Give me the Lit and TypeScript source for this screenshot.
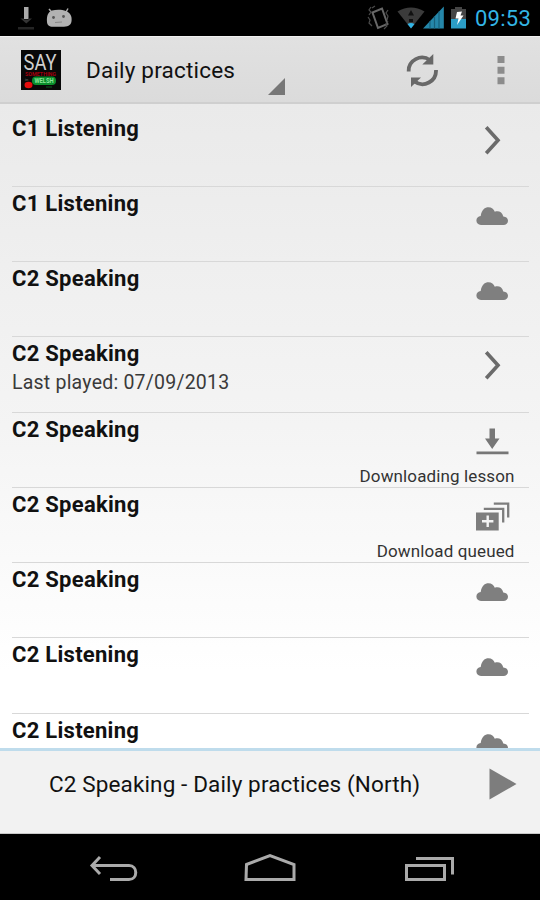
import { LitElement, html, svg, css, nothing } from "lit";
import { customElement } from "lit/decorators.js";

type IconName = "open" | "cloud" | "download" | "queued";

interface Lesson {
  title: string;
  icon: IconName;
  played?: string;
  status?: string;
}

const lessons: Lesson[] = [
  { title: "C1 Listening", icon: "open" },
  { title: "C1 Listening", icon: "cloud" },
  { title: "C2 Speaking", icon: "cloud" },
  { title: "C2 Speaking", icon: "open", played: "Last played: 07/09/2013" },
  { title: "C2 Speaking", icon: "download", status: "Downloading lesson" },
  { title: "C2 Speaking", icon: "queued", status: "Download queued" },
  { title: "C2 Speaking", icon: "cloud" },
  { title: "C2 Listening", icon: "cloud" },
  { title: "C2 Listening", icon: "cloud" },
];

const shapes = {
  open: svg`<path d="M14.2 3.2 26 16.3 14.2 29.2" fill="none" stroke="#6b6b6b" stroke-width="3.6"/>`,
  cloud: svg`<path fill="#7f7f7f" d="M9 26c-3 0-4.6-2-4.6-4.4 0-2.6 1.7-4.3 4.3-4.6C9.600 10.800 13 8.300 16.500 8.300c3 0 5.400 1.800 6.300 4.500 3.900-1.400 7.500.5 8.500 4.700 3 .3 4.700 1.900 4.700 4.300 0 2.700-1.900 4.200-4.600 4.200z"/>`,
  download: svg`<path fill="#777" d="M17.500 3.500h5.500v10h4.500L20.200 24 13 13.500h4.500zM4.500 26.400h32v2.800h-32z"/>`,
  queued: svg`<path fill="#7d7d7d" d="M4 12.500h22.700v18H4z"/><path d="M10 21.300h11.400M15.700 15.600v11.400" stroke="#f3f3f3" stroke-width="2.400"/><path d="M11.800 8.800h19.400v13.800M21.800 3.600h14.400v13.800" fill="none" stroke="#7d7d7d" stroke-width="2.300"/>`,
};

@customElement("app-root")
export class AppRoot extends LitElement {
  static styles = css`
    :host {
      display: flex;
      flex-direction: column;
      width: 540px;
      height: 900px;
      overflow: hidden;
      background: #000;
      color: #111;
      font-family: Roboto, "Liberation Sans", sans-serif;
      white-space: nowrap;
    }
    * { box-sizing: border-box; }
    svg { display: block; flex: none; }
    .status { display: flex; align-items: center; height: 36px; flex: none; background: #000; }
    .spacer { flex: 1; }
    .clock { width: 65px; color: #33b5e5; font-size: 22px; line-height: 36px; padding-top: 1px; letter-spacing: 0.250px; }
    .bar {
      display: flex;
      align-items: center;
      flex: none;
      height: 68px;
      padding-left: 21px;
      background: linear-gradient(#e1e1e1, #dbdbdb);
      border-top: 1px solid #f0f0f0;
      border-bottom: 2px solid #cfcfcf;
    }
    .heading { width: 182px; margin-left: 25px; font-size: 22.500px; letter-spacing: 0.200px; }
    .corner { align-self: flex-end; margin: 0 120px 7px 0; }
    .overflow { margin-left: 58px; }
    .list {
      flex: 1;
      min-height: 0;
      overflow: hidden;
      padding: 7.500px 11px 0 12px;
      background: linear-gradient(#eaeaea, #f4f4f4 50%, #fff 88%);
    }
    .row {
      display: grid;
      grid-template-columns: 1fr 200px;
      height: 75.250px;
      border-bottom: 1px solid #d8d8d8;
    }
    .title { font-size: 22px; font-weight: 700; line-height: 26px; padding-top: 4px; letter-spacing: 0.270px; }
    .played { font-size: 19.500px; line-height: 24px; margin-top: 4px; color: #3a3a3a; letter-spacing: 0.220px; }
    .side { display: flex; flex-direction: column; align-items: flex-end; padding: 12px 14.500px 0 0; }
    .side svg { margin-right: 2.500px; }
    .label { font-size: 17px; line-height: 20px; margin-top: 1px; color: #333; letter-spacing: 0.120px; }
    .player {
      display: flex;
      align-items: center;
      height: 86px;
      flex: none;
      padding: 0 23px 16px 49px;
      border-top: 3px solid #bfdcec;
      border-bottom: 1px solid #c8c8c8;
      background: #f2f2f2;
    }
    .track { flex: 1; font-size: 22.500px; letter-spacing: 0.130px; }
    .nav { height: 66px; flex: none; background: #000; }
  `;

  render() {
    return html`
      <div class="status">
        <svg width="80" height="36" viewBox="0 0 80 36">
          <path d="M24 7h4.500v12H24z" fill="#aaa"/>
          <path d="M20.500 18.500h3.500v1h4.500v-1H32l-5.700 5z" fill="#343434"/>
          <path d="M18 27h16v2.500H18z" fill="#252525"/>
          <path d="m49 9 3.500 4M68 8.500 65.500 13" stroke="#aaa" stroke-width="1.500"/>
          <path d="M47 22c-.5-6 1-10 5-11.500 4-1.200 10-1.200 14 .5 4.500 2 6 5.500 5.600 9.500-.3 4-2.600 6-7.600 6.300H53c-4 0-5.800-1.800-6-4.800z" fill="#b2b2b2"/>
          <circle cx="53.500" cy="17.500" r="1.400" fill="#555"/><circle cx="63.500" cy="16.500" r="1.400" fill="#555"/>
          <path d="M55 22.500l7-.5" stroke="#888"/>
        </svg>
        <div class="spacer"></div>
        <svg width="110" height="36" viewBox="365 0 110 36">
          <path d="m372.500 12.500 9.500-4 5.500 15.500-9.500 4z" fill="none" stroke="#676767" stroke-width="2"/>
          <path d="m371 7-2 3 2 2-2 3M375 6l-3 2M384 29l3-3-1-2 2-3M368 17l2 3-1 3 3 3M388 10l-2 3 2 3-1 4" fill="none" stroke="#4b4b4b" stroke-width="1.200"/>
          <path d="M397.500 11.500q13.500-8 27 0L411 28.500z" fill="#3b3b3b"/>
          <path d="M408 15.500 411 10l3 5.500zM409 19h4v3h-4z" fill="#111"/>
          <path d="M407.500 24q3.500-2 7 0l-3.500 4.500z" fill="#33b5e5"/>
          <path d="M443.800 6.500v22H423z" fill="#2587aa"/>
          <path d="M430 21v7.500M434.500 16v12.500M439 11.500v17" stroke="#17617d" stroke-width="1.200"/>
          <path d="M455 7h7v2h4v10h-15V9h4z" fill="#454545"/>
          <path d="M451 19h15v9.500h-15z" fill="#2b9dc6"/>
          <path d="m457 12 5-.5-1.500 4h3L457 25l1.500-6.500h-3z" fill="#fff"/>
        </svg>
        <div class="clock">09:53</div>
      </div>
      <div class="bar">
        <svg width="40" height="40" viewBox="0 0 40 40">
          <path d="M0 0h40v40H0z" fill="#080808"/>
          <text x="2.500" y="20" font-size="22" textLength="33" lengthAdjust="spacingAndGlyphs" fill="#d0d0d0" font-family="Roboto">SAY</text>
          <text x="4" y="26" font-size="6" font-weight="700" textLength="31" lengthAdjust="spacingAndGlyphs" fill="#a3000d" font-family="Roboto">SOMETHING</text>
          <text x="4" y="31" font-size="4" fill="#777" font-family="Roboto">in</text>
          <rect x="11" y="26.500" width="24" height="8.500" rx="4" fill="#0a8d2c"/>
          <text x="13.500" y="33.300" font-size="6.500" font-weight="700" textLength="19" lengthAdjust="spacingAndGlyphs" fill="#8de49b" font-family="Roboto">WELSH</text>
          <ellipse cx="7.500" cy="35" rx="4" ry="3.200" fill="#e40d0d"/>
          <path d="M25 37h6" stroke="#0a5a1f"/>
        </svg>
        <div class="heading">Daily practices</div>
        <svg class="corner" width="17" height="17" viewBox="0 0 17 17"><path d="M17 0v17H0z" fill="#777"/></svg>
        <svg width="34" height="34" viewBox="405 52 34 34">
          <path d="M408.700 70.500a13.300 13.300 0 0 1 21.300-11.200M436 69a13.500 13.500 0 0 1-21.500 11.500" fill="none" stroke="#686868" stroke-width="3.800"/>
          <path d="M433.300 53v10.500h-11zM411 86V76.500h10z" fill="#686868"/>
        </svg>
        <svg class="overflow" width="8" height="30" viewBox="0 0 8 30"><path d="M.5 1h7v7h-7zm0 10.700h7v7h-7zm0 10.600h7v7h-7z" fill="#8c8c8c"/></svg>
      </div>
      <div class="list">
        ${lessons.map(
          (l) => html`<div class="row">
            <div>
              <div class="title">${l.title}</div>
              ${l.played ? html`<div class="played">${l.played}</div>` : nothing}
            </div>
            <div class="side">
              <svg width="40" height="40" viewBox="0 0 40 40">${shapes[l.icon]}</svg>
              ${l.status ? html`<div class="label">${l.status}</div>` : nothing}
            </div>
          </div>`,
        )}
      </div>
      <div class="player">
        <div class="track">C2 Speaking - Daily practices (North)</div>
        <svg width="28" height="32" viewBox="0 0 28 32"><path d="M.5.500 27.500 16 .5 31.500z" fill="#7d7d7d"/></svg>
      </div>
      <svg class="nav" width="540" height="66" viewBox="0 834 540 66" fill="none" stroke="#aaa" stroke-width="3">
        <path d="m100 857-8 8.500 8 8.500M92 865.500h37c9 0 9 14 0 14h-19"/>
        <path d="M246.500 864.500 270 855.500l24 9v15h-48z"/>
        <path d="M406.500 865.500h38v14h-38zM416 858.500h36.500v16"/>
      </svg>
    `;
  }
}
